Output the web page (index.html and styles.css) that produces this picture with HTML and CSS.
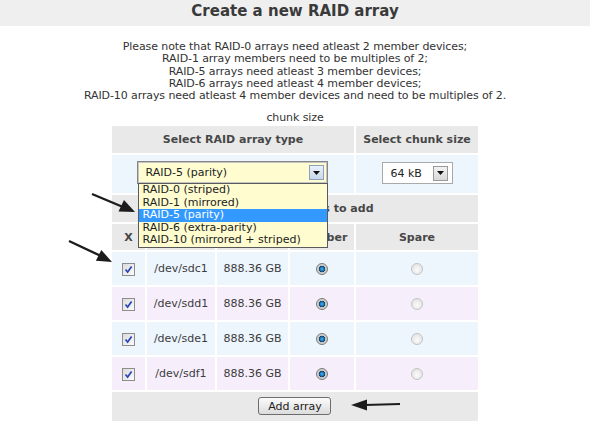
FILE: index.html
```html
<!DOCTYPE html>
<html>
<head>
<meta charset="utf-8">
<title>Create a new RAID array</title>
<link rel="stylesheet" href="styles.css">
</head>
<body>
<h1 class="title">Create a new RAID array</h1>
<div class="notes">
  <p>Please note that RAID-0 arrays need atleast 2 member devices;<br>RAID-1 array members need to be multiples of 2;<br>RAID-5 arrays need atleast 3 member devices;<br>RAID-6 arrays need atleast 4 member devices;<br>RAID-10 arrays need atleast 4 member devices and need to be multiples of 2.</p>
  <p class="chunk-note">chunk size</p>
</div>
<table class="raid">
  <colgroup>
    <col class="c-x"><col class="c-dev"><col class="c-size"><col class="c-mem"><col class="c-spare">
  </colgroup>
  <tr class="head">
    <th colspan="4">Select RAID array type</th>
    <th>Select chunk size</th>
  </tr>
  <tr class="blue pick">
    <td colspan="4">
      <div class="select type-select">
        <span class="sel-text">RAID-5 (parity)</span>
        <span class="sel-btn blue-btn"><svg width="7" height="4" viewBox="0 0 7 4"><path d="M0 0H7L3.5 4Z" fill="#111"/></svg></span>
        <ul class="listbox">
          <li>RAID-0 (striped)</li>
          <li>RAID-1 (mirrored)</li>
          <li class="on">RAID-5 (parity)</li>
          <li>RAID-6 (extra-parity)</li>
          <li>RAID-10 (mirrored + striped)</li>
        </ul>
      </div>
    </td>
    <td>
      <div class="select chunk-select">
        <span class="sel-text">64 kB</span>
        <span class="sel-btn grey-btn"><svg width="7" height="4" viewBox="0 0 7 4"><path d="M0 0H7L3.5 4Z" fill="#111"/></svg></span>
      </div>
    </td>
  </tr>
  <tr class="head">
    <th colspan="5">Select the devices to add</th>
  </tr>
  <tr class="head sub">
    <th>X</th><th>Device</th><th>Size</th><th>Member</th><th>Spare</th>
  </tr>
  <tr class="blue dev">
    <td><span class="check"><svg width="9" height="9" viewBox="0 0 9 9"><path d="M1.5 4.5L3.6 7L7.6 1.5" fill="none" stroke="#2a47b8" stroke-width="1.7"/></svg></span></td>
    <td>/dev/sdc1</td><td>888.36 GB</td>
    <td><span class="radio on"></span></td><td><span class="radio"></span></td>
  </tr>
  <tr class="purple dev">
    <td><span class="check"><svg width="9" height="9" viewBox="0 0 9 9"><path d="M1.5 4.5L3.6 7L7.6 1.5" fill="none" stroke="#2a47b8" stroke-width="1.7"/></svg></span></td>
    <td>/dev/sdd1</td><td>888.36 GB</td>
    <td><span class="radio on"></span></td><td><span class="radio"></span></td>
  </tr>
  <tr class="blue dev">
    <td><span class="check"><svg width="9" height="9" viewBox="0 0 9 9"><path d="M1.5 4.5L3.6 7L7.6 1.5" fill="none" stroke="#2a47b8" stroke-width="1.7"/></svg></span></td>
    <td>/dev/sde1</td><td>888.36 GB</td>
    <td><span class="radio on"></span></td><td><span class="radio"></span></td>
  </tr>
  <tr class="purple dev">
    <td><span class="check"><svg width="9" height="9" viewBox="0 0 9 9"><path d="M1.5 4.5L3.6 7L7.6 1.5" fill="none" stroke="#2a47b8" stroke-width="1.7"/></svg></span></td>
    <td>/dev/sdf1</td><td>888.36 GB</td>
    <td><span class="radio on"></span></td><td><span class="radio"></span></td>
  </tr>
  <tr class="head foot">
    <td colspan="5"><button class="add" type="button">Add array</button></td>
  </tr>
</table>
<svg class="arrows" width="590" height="421" viewBox="0 0 590 421">
  <g fill="#1c1c1c" stroke="#1c1c1c">
    <line x1="92" y1="194" x2="123" y2="207" stroke-width="2.4"/>
    <polygon points="135,212 118.5,211.5 124,200" stroke="none"/>
    <line x1="69" y1="241" x2="101" y2="256" stroke-width="2.4"/>
    <polygon points="112,262 95.9,260.7 101.3,249.9" stroke="none"/>
    <line x1="365" y1="405" x2="400" y2="404" stroke-width="2"/>
    <polygon points="351,405 367,399.5 367,410.5" stroke="none"/>
  </g>
</svg>
</body>
</html>
```

FILE: styles.css
```css
* { box-sizing: border-box; }
html, body { margin: 0; padding: 0; background: #fff; }
body {
  font-family: "DejaVu Sans", "Liberation Sans", sans-serif;
  font-size: 11px;
  color: #333;
  width: 590px;
  height: 421px;
  overflow: hidden;
  position: relative;
}
.title {
  margin: 0;
  height: 26px;
  line-height: 23px;
  background: #efefef;
  text-align: center;
  font-size: 15px;
  font-weight: bold;
  color: #3a3a3a;
}
.notes {
  margin-top: 15px;
  text-align: center;
  line-height: 12.25px;
  letter-spacing: -0.1px;
}
.notes p { margin: 0; }
.notes .chunk-note { margin-top: 10px; line-height: 12px; }

.raid {
  margin: 0 auto;
  width: 370px;
  border-collapse: separate;
  border-spacing: 2px;
  table-layout: fixed;
}
.c-x { width: 33px; }
.c-dev { width: 68px; }
.c-size { width: 71px; }
.c-mem { width: 64px; }
.c-spare { width: 122px; }
.raid th, .raid td {
  padding: 0;
  text-align: center;
  vertical-align: middle;
  color: #444;
  white-space: nowrap;
}
.head th, .head td {
  background: #e9e9e9;
  font-weight: bold;
  height: 27px;
  color: #474747;
}
.head.sub th { height: 26px; }
.blue td { background: #edf5fd; }
.purple td { background: #f6effb; }
.pick td { height: 38px; vertical-align: top; padding-top: 6px; }
.dev td { height: 33px; color: #3c3c3c; }

.select {
  display: inline-flex;
  align-items: center;
  position: relative;
  text-align: left;
}
.type-select {
  width: 191px;
  height: 23px;
  border: 1px solid #858585;
  box-shadow: inset 0 0 0 1px #c4c4c4;
  background: #fffdcf;
  padding: 0 3px 0 7px;
}
.chunk-select {
  margin-top: 1px;
  width: 71px;
  height: 22px;
  border: 1px solid #a9a9a9;
  background: #fff;
  padding: 0 4px 0 8px;
}
.sel-text { flex: 1; color: #222; }
.sel-btn {
  width: 15px;
  height: 15px;
  display: flex;
  align-items: center;
  justify-content: center;
}
.blue-btn {
  border: 1px solid #8ea2bd;
  background: linear-gradient(#eaf1fa, #c8d7ea);
}
.grey-btn {
  border: 1px solid #9a9a9a;
  background: linear-gradient(#f2f2f2, #d8d8d8);
}
.listbox {
  position: absolute;
  left: 0;
  top: 100%;
  width: 190px;
  margin: 0;
  padding: 0;
  list-style: none;
  background: #fffdcf;
  border: 1px solid #5a5a5a;
  z-index: 3;
}
.listbox li {
  line-height: 12.5px;
  padding-left: 3px;
  white-space: nowrap;
  color: #222;
}
.listbox li.on { background: #3399ff; color: #fff; }

.check {
  display: inline-flex;
  align-items: center;
  justify-content: center;
  width: 13px;
  height: 13px;
  border: 1px solid #8d8d8d;
  background: linear-gradient(135deg, #dcdcdc, #fbfbfb);
  vertical-align: middle;
}
.radio {
  display: inline-block;
  width: 12px;
  height: 12px;
  border-radius: 50%;
  border: 1px solid #c3c3c3;
  background: radial-gradient(circle at 50% 60%, #fbfbfb 0, #e6e6e6 70%);
  vertical-align: middle;
}
.radio.on {
  border-color: #7a7a7a;
  background: radial-gradient(circle at 50% 50%, #4eb6f0 0, #0f6db2 2.2px, #1a3f5a 2.9px, #c2c2c2 3.5px, #f0f0f0 100%);
}
.foot td { height: 30px; vertical-align: top; padding-top: 5px; }
.add {
  font: inherit;
  font-weight: normal;
  width: 73px;
  height: 18px;
  padding: 0;
  border: 1px solid #6d6d6d;
  border-radius: 3px;
  background: linear-gradient(#fbfbfb, #dcdcdc);
  color: #222;
  cursor: pointer;
}
.arrows {
  position: absolute;
  left: 0;
  top: 0;
  pointer-events: none;
  z-index: 5;
}
```
